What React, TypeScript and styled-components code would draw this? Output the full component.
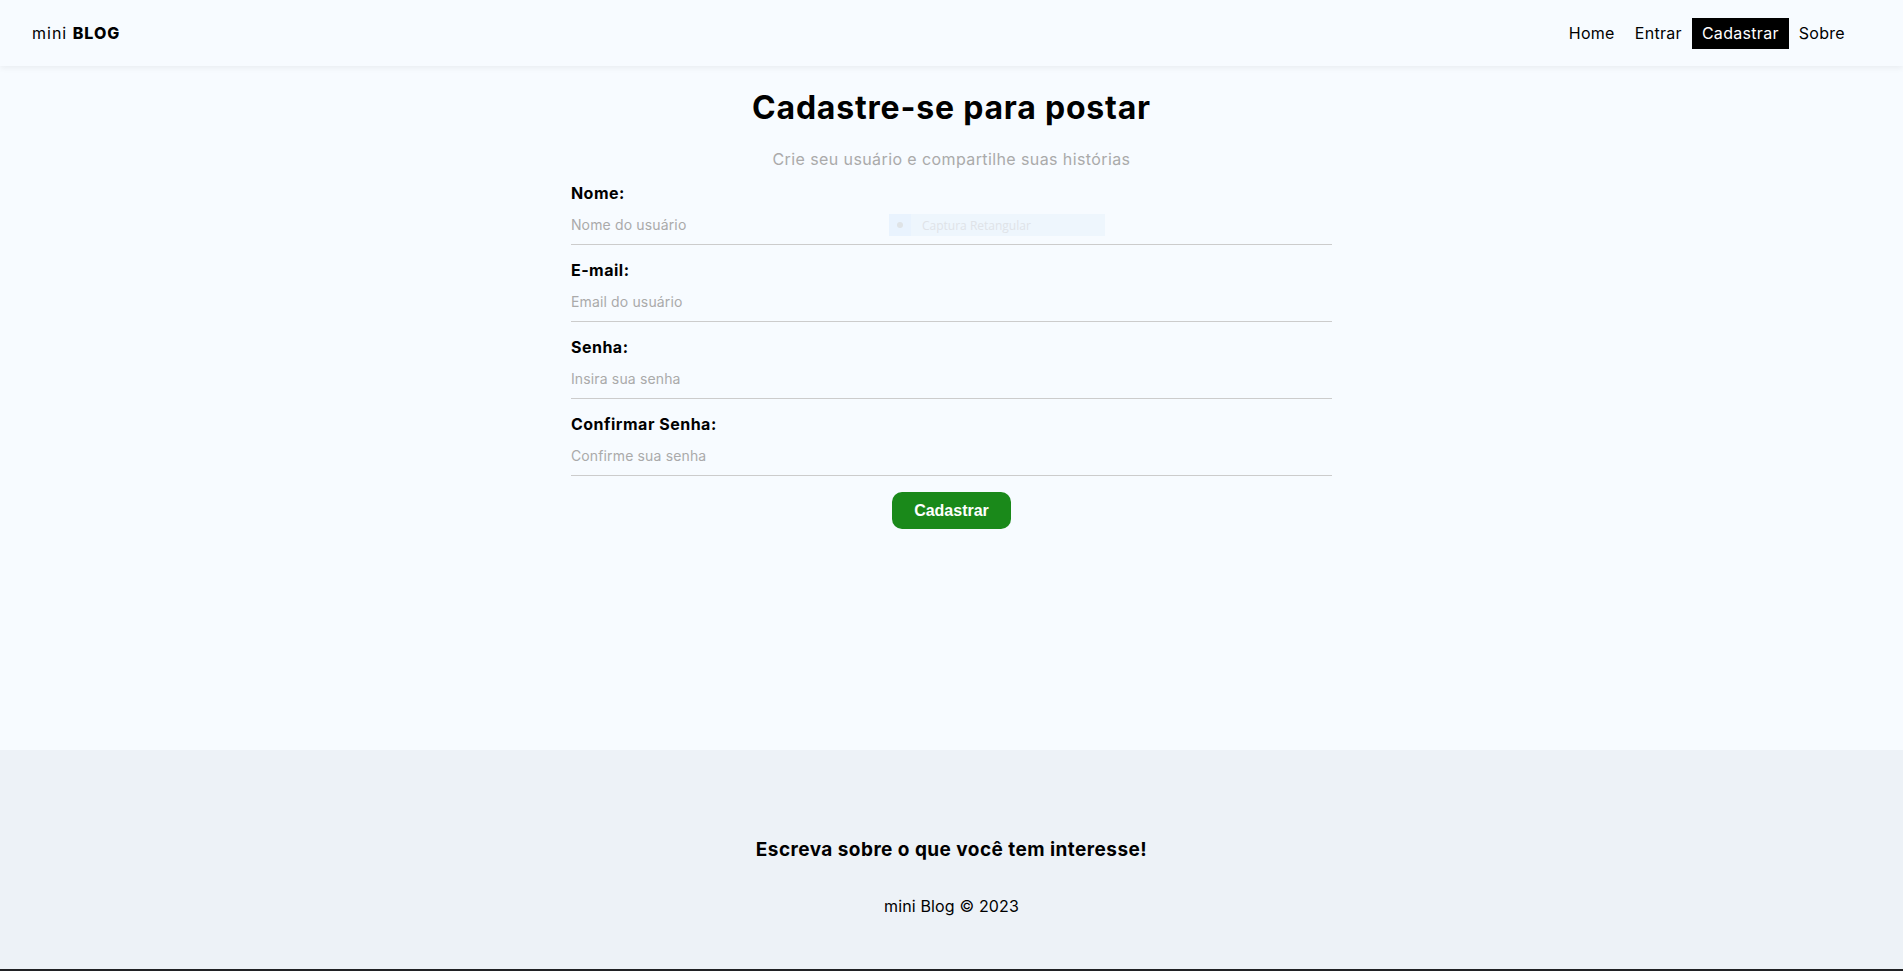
import React from "react";
import styled, { createGlobalStyle } from "styled-components";

const GlobalStyle = createGlobalStyle`
  * { box-sizing: border-box; }
  html, body { margin: 0; padding: 0; }
  body {
    background: #f7fbff;
    font-family: "Inter", "Noto Sans", sans-serif;
    color: #000;
  }
`;

const Page = styled.div`
  min-height: 100vh;
  display: flex;
  flex-direction: column;
  position: relative;
`;

const NavBar = styled.nav`
  height: 66px;
  display: flex;
  align-items: center;
  justify-content: space-between;
  padding: 0 48px 0 32px;
  background: #f7fbff;
  box-shadow: 0 2px 6px rgba(0, 0, 0, 0.06);
  position: relative;
  z-index: 1;
`;

const Brand = styled.a`
  font-size: 16px;
  color: #000;
  text-decoration: none;
  letter-spacing: 1px;
  strong {
    font-weight: 800;
  }
`;

const NavList = styled.ul`
  list-style: none;
  display: flex;
  margin: 0;
  padding: 0;
`;

const NavLink = styled.a<{ $active?: boolean }>`
  display: block;
  padding: 6px 10px;
  font-size: 16px;
  line-height: 19px;
  letter-spacing: 0.3px;
  text-decoration: none;
  color: ${(p) => (p.$active ? "#fff" : "#000")};
  background: ${(p) => (p.$active ? "#000" : "transparent")};
`;

const Main = styled.main`
  flex: 1;
  display: flex;
  flex-direction: column;
  align-items: center;
  padding-top: 22px;
`;

const Title = styled.h1`
  font-size: 32px;
  font-weight: 700;
  letter-spacing: 0.8px;
  margin: 0;
  line-height: 40px;
`;

const Subtitle = styled.p`
  color: #aaa;
  font-size: 16px;
  letter-spacing: 0.4px;
  margin: 21px 0 0;
  line-height: 20px;
`;

const Form = styled.form`
  width: 40%;
  display: flex;
  flex-direction: column;
  align-items: center;
  margin-top: 13.5px;
`;

const Field = styled.label`
  width: 100%;
  display: flex;
  flex-direction: column;
  margin-bottom: 15px;
`;

const LabelText = styled.span`
  font-weight: 700;
  font-size: 16px;
  letter-spacing: 0.5px;
  line-height: 20px;
`;

const Input = styled.input`
  border: none;
  border-bottom: 1px solid #ccc;
  background: transparent;
  padding: 12px 0 10px;
  margin: 0;
  font-family: inherit;
  font-size: 14px;
  letter-spacing: 0.15px;
  line-height: 19px;
  outline: none;
  &::placeholder {
    color: #aaa;
  }
`;

const SubmitButton = styled.button`
  margin-top: 1px;
  background: #1a891a;
  color: #fff;
  border: none;
  border-radius: 10px;
  padding: 10px 22.5px;
  font-family: "Liberation Sans", Arial, sans-serif;
  font-weight: 700;
  font-size: 16px;
  line-height: 17px;
  cursor: pointer;
`;

const CaptureHint = styled.div`
  position: absolute;
  left: 889px;
  top: 214px;
  width: 216px;
  height: 22px;
  display: flex;
  align-items: center;
  background: #eef6fd;
  pointer-events: none;
  font-family: "Open Sans", sans-serif;
  font-size: 12px;
  color: #dfe3e8;
`;

const CaptureIcon = styled.span`
  width: 22px;
  height: 22px;
  background: #e9f3fe;
  display: flex;
  align-items: center;
  justify-content: center;
  margin-right: 11px;
  &::after {
    content: "";
    width: 6px;
    height: 6px;
    border-radius: 50%;
    background: #dfe3e6;
  }
`;

const Footer = styled.footer`
  height: 219px;
  background: #edf2f7;
  display: flex;
  flex-direction: column;
  align-items: center;
  justify-content: center;
  padding-top: 35px;
`;

const FooterTitle = styled.h3`
  font-size: 19px;
  font-weight: 700;
  letter-spacing: 0.45px;
  margin: 0;
  line-height: 24px;
`;

const FooterText = styled.p`
  font-size: 16px;
  letter-spacing: 0.15px;
  margin: 34px 0 0;
  line-height: 20px;
`;

const Taskbar = styled.div`
  height: 2px;
  background: #202124;
`;

const fields = [
  { label: "Nome:", type: "text", placeholder: "Nome do usuário" },
  { label: "E-mail:", type: "email", placeholder: "Email do usuário" },
  { label: "Senha:", type: "password", placeholder: "Insira sua senha" },
  { label: "Confirmar Senha:", type: "password", placeholder: "Confirme sua senha" },
];

export default function App() {
  return (
    <Page>
      <GlobalStyle />
      <NavBar>
        <Brand href="#">
          mini <strong>BLOG</strong>
        </Brand>
        <NavList>
          <li><NavLink href="#">Home</NavLink></li>
          <li><NavLink href="#">Entrar</NavLink></li>
          <li><NavLink href="#" $active>Cadastrar</NavLink></li>
          <li><NavLink href="#">Sobre</NavLink></li>
        </NavList>
      </NavBar>
      <Main>
        <Title>Cadastre-se para postar</Title>
        <Subtitle>Crie seu usuário e compartilhe suas histórias</Subtitle>
        <Form onSubmit={(e) => e.preventDefault()}>
          {fields.map((f) => (
            <Field key={f.label}>
              <LabelText>{f.label}</LabelText>
              <Input type={f.type} placeholder={f.placeholder} />
            </Field>
          ))}
          <SubmitButton type="submit">Cadastrar</SubmitButton>
        </Form>
      </Main>
      <CaptureHint>
        <CaptureIcon />
        Captura Retangular
      </CaptureHint>
      <Footer>
        <FooterTitle>Escreva sobre o que você tem interesse!</FooterTitle>
        <FooterText>mini Blog © 2023</FooterText>
      </Footer>
      <Taskbar />
    </Page>
  );
}
